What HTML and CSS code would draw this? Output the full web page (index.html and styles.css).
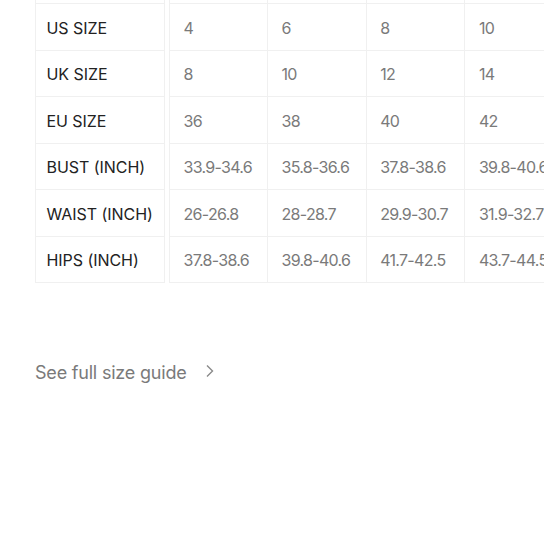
FILE: index.html
```html
<!DOCTYPE html>
<html>
<head>
<meta charset="utf-8">
<link rel="stylesheet" href="styles.css">
</head>
<body>
<div class="page">
  <div class="table-wrap">
    <div class="row row-partial">
      <div class="cell label"></div>
      <div class="cell data first"></div>
      <div class="cell data"></div>
      <div class="cell data"></div>
      <div class="cell data"></div>
    </div>
    <div class="row">
      <div class="cell label">US SIZE</div>
      <div class="cell data first">4</div>
      <div class="cell data">6</div>
      <div class="cell data">8</div>
      <div class="cell data">10</div>
    </div>
    <div class="row">
      <div class="cell label">UK SIZE</div>
      <div class="cell data first">8</div>
      <div class="cell data">10</div>
      <div class="cell data">12</div>
      <div class="cell data">14</div>
    </div>
    <div class="row">
      <div class="cell label">EU SIZE</div>
      <div class="cell data first">36</div>
      <div class="cell data">38</div>
      <div class="cell data">40</div>
      <div class="cell data">42</div>
    </div>
    <div class="row">
      <div class="cell label">BUST (INCH)</div>
      <div class="cell data first">33.9-34.6</div>
      <div class="cell data">35.8-36.6</div>
      <div class="cell data">37.8-38.6</div>
      <div class="cell data">39.8-40.6</div>
    </div>
    <div class="row">
      <div class="cell label">WAIST (INCH)</div>
      <div class="cell data first">26-26.8</div>
      <div class="cell data">28-28.7</div>
      <div class="cell data">29.9-30.7</div>
      <div class="cell data">31.9-32.7</div>
    </div>
    <div class="row">
      <div class="cell label">HIPS (INCH)</div>
      <div class="cell data first">37.8-38.6</div>
      <div class="cell data">39.8-40.6</div>
      <div class="cell data">41.7-42.5</div>
      <div class="cell data">43.7-44.5</div>
    </div>
  </div>
  <a class="guide-link" href="#">
    <span>See full size guide</span>
    <svg class="chevron" width="10" height="14" viewBox="0 0 10 14"><path d="M2 1.5 L7.5 7 L2 12.5" fill="none" stroke="#8a8a8a" stroke-width="1.4"/></svg>
  </a>
</div>
</body>
</html>
```

FILE: styles.css
```css
html, body {
  margin: 0;
  padding: 0;
  background: #fff;
}
body {
  font-family: "Inter", "Liberation Sans", sans-serif;
}
.page {
  padding-left: 35px;
}
.table-wrap {
  width: 509px;
  overflow: hidden;
}
.row {
  display: flex;
  height: 46.5px;
  white-space: nowrap;
}
.row-partial {
  height: 4px;
}
.cell {
  box-sizing: border-box;
  flex: none;
  display: flex;
  align-items: center;
  height: 100%;
  padding-top: 2px;
  border-bottom: 1px solid #f0f0f0;
  overflow: hidden;
}
.row-partial .cell {
  padding-top: 0;
}
.label {
  width: 130px;
  padding-left: 10.5px;
  border-left: 1px solid #f0f0f0;
  border-right: 1px solid #f0f0f0;
  color: #222;
  font-size: 16px;
  letter-spacing: -0.05px;
}
.data {
  width: 98.7px;
  padding-left: 13.5px;
  border-right: 1px solid #f0f0f0;
  color: #7a7a7a;
  font-size: 16px;
  letter-spacing: -0.7px;
}
.data.first {
  margin-left: 4px;
  border-left: 1px solid #f0f0f0;
  width: 99px;
}
.guide-link {
  display: inline-flex;
  align-items: center;
  gap: 18px;
  margin-top: 79px;
  color: #7a7a7a;
  font-size: 18px;
  text-decoration: none;
  letter-spacing: -0.2px;
}
.chevron {
  margin-top: -4px;
}
```
